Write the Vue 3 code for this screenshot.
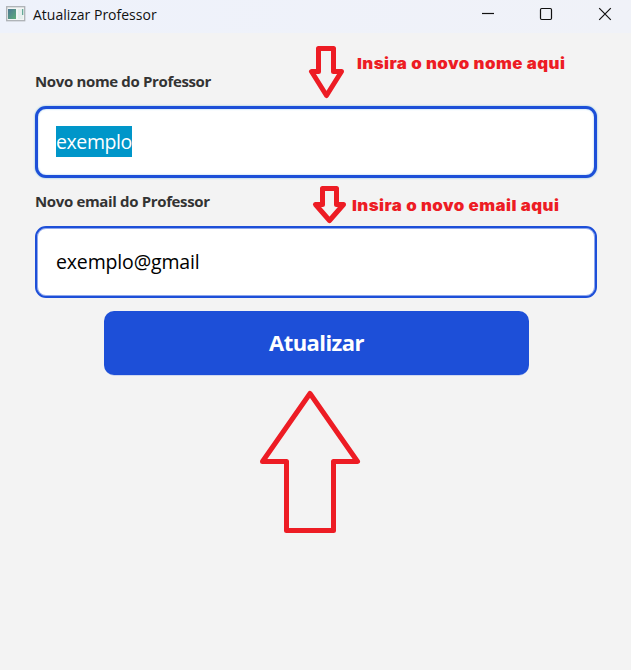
<script setup>
import { ref } from 'vue'

const nome = ref('exemplo')
const email = ref('exemplo@gmail')
</script>

<template>
  <div class="window">
    <header class="titlebar">
      <svg class="app-icon" width="20" height="16" viewBox="0 0 20 16">
        <rect x="0.7" y="0.7" width="18" height="14" fill="#f3f6f5" stroke="#adb1b5" stroke-width="1.3" />
        <rect x="2" y="3" width="8" height="10" fill="url(#pane)" />
        <rect x="12" y="3" width="5" height="10" fill="#e5efed" />
        <rect x="16" y="3" width="1.3" height="6" fill="#65a998" />
        <defs>
          <linearGradient id="pane" x1="0" y1="0" x2="1" y2="1">
            <stop offset="0" stop-color="#4d7795" />
            <stop offset="1" stop-color="#5eae79" />
          </linearGradient>
        </defs>
      </svg>
      <h1 class="title">Atualizar Professor</h1>
      <div class="controls">
        <svg width="14" height="14" viewBox="0 0 14 14"><path d="M1 6.5H13" /></svg>
        <svg width="14" height="14" viewBox="0 0 14 14"><rect x="1.5" y="1.5" width="11" height="11" rx="1.2" /></svg>
        <svg class="close" width="14" height="14" viewBox="0 0 14 14"><path d="M1.2 1.2L12.8 12.8M12.8 1.2L1.2 12.8" /></svg>
      </div>
    </header>

    <main class="form">
      <label class="label label-nome">Novo nome do Professor</label>
      <div class="field focused"><span class="value selected">{{ nome }}</span></div>
      <label class="label label-email">Novo email do Professor</label>
      <div class="field"><span class="value">{{ email }}</span></div>
      <button class="submit" type="button">Atualizar</button>
    </main>

    <svg class="arrows" width="631" height="670" viewBox="0 0 631 670">
      <path d="M318.5 48.5H333.5V71.5H341.5L326.5 95.5L311.5 71.5H318.5Z" />
      <path d="M322.5 188.5H336.5V204.5H343.5L329.5 220.5L315.5 204.5H322.5Z" />
      <path d="M310 393.5L357.5 461.5H333.5V530.5H286.5V461.5H262.5Z" />
    </svg>
    <p class="note note-nome">Insira o novo nome aqui</p>
    <p class="note note-email">Insira o novo email aqui</p>
  </div>
</template>

<style>
body {
  margin: 0;
  background: #f3f3f3;
}
</style>

<style scoped>
.window {
  position: relative;
  box-sizing: border-box;
  width: 631px;
  height: 670px;
  overflow: hidden;
  background: #f3f3f3;
  font-family: "Open Sans", "Noto Sans", sans-serif;
}
.titlebar {
  display: flex;
  align-items: center;
  height: 33px;
  box-sizing: border-box;
  padding: 0 19px 5px 6px;
  background: linear-gradient(90deg, #eef2fb, #f0f2f8);
}
.app-icon {
  margin-right: 7px;
}
.title {
  margin: 0;
  flex: 1;
  font-size: 14px;
  font-weight: 400;
  line-height: 20px;
  letter-spacing: 0;
  color: #111;
  padding-top: 2px;
}
.controls {
  display: flex;
  gap: 44px;
}
.controls svg {
  fill: none;
  stroke: #111;
  stroke-width: 1.2;
}
.controls .close {
  margin-left: 1px;
}
.form {
  display: flex;
  flex-direction: column;
  padding: 38px 34px 0 35px;
}
.label {
  height: 20px;
  font-size: 15px;
  font-weight: 700;
  line-height: 20px;
  letter-spacing: -0.35px;
  color: #333;
}
.label-nome {
  margin-bottom: 15px;
}
.label-email {
  margin: 13px 0 15px;
}
.field {
  box-sizing: border-box;
  display: flex;
  align-items: center;
  height: 72px;
  padding: 0 19px 2px;
  border: 2px solid #1d4fd8;
  border-radius: 11px;
  background: #fff;
  box-shadow: inset 0 0 0 1px #8ea7ec;
}
.field.focused {
  border-width: 3px;
  padding: 0 18px 2px;
  box-shadow: 0 0 2px #67b5dc, inset 0 0 2px #8fc5e8;
}
.value {
  height: 31px;
  font-size: 19.5px;
  line-height: 31px;
  letter-spacing: -0.15px;
  color: #000;
}
.selected {
  letter-spacing: -0.4px;
  background: #0096c9;
  color: #fff;
}
.submit {
  align-self: center;
  width: 425px;
  height: 64px;
  margin-top: 13px;
  padding: 0 0 2px 1px;
  border: 0;
  border-radius: 10px;
  background: #1d4fd8;
  box-shadow: 0 1px 0 -0.5px #a9bbec;
  color: #fff;
  font-family: inherit;
  font-size: 22px;
  font-weight: 700;
  letter-spacing: -0.55px;
}
.arrows {
  position: absolute;
  inset: 0;
  fill: none;
  stroke: #ed1c24;
  stroke-width: 5;
  stroke-linejoin: round;
}
.note {
  position: absolute;
  margin: 0;
  font-family: Inter, "Liberation Sans", sans-serif;
  font-size: 15px;
  font-weight: 900;
  line-height: 20px;
  letter-spacing: 0.42px;
  transform: scaleX(1.12);
  transform-origin: 0 0;
  white-space: nowrap;
  color: #ed1c24;
}
.note-nome {
  left: 357px;
  top: 54px;
}
.note-email {
  left: 352px;
  top: 196px;
}
</style>
